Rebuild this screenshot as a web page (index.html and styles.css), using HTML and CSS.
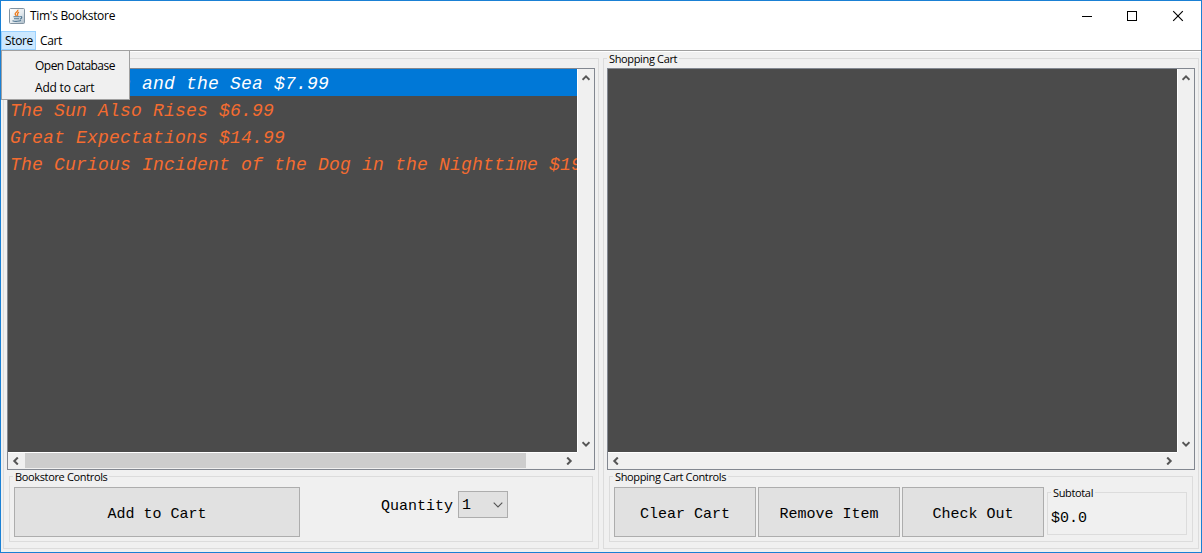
FILE: index.html
```html
<!DOCTYPE html>
<html lang="en">
<head>
<meta charset="utf-8">
<title>Tim's Bookstore</title>
<link rel="stylesheet" href="styles.css">
</head>
<body>
<div class="window">
  <header class="titlebar">
    <svg class="java" width="16" height="16" viewBox="0 0 16 16">
      <defs><linearGradient id="tile" x1="0" y1="0" x2="1" y2="1"><stop offset="0" stop-color="#fff"/><stop offset=".55" stop-color="#e5ebef"/><stop offset="1" stop-color="#a9bac7"/></linearGradient></defs>
      <rect x=".5" y=".5" width="15" height="15" rx="1" fill="url(#tile)" stroke="#8293a1"/>
      <path d="M8.8 1.8C9.6 4 5.4 4.6 6.2 6.300c.3.700.9 1 1.100 1.700M10 4.200C7.500 5.300 8.800 6.200 8.600 7.800" fill="none" stroke="#ee7a1a" stroke-width="1.300"/>
      <path d="M4.500 8.800h6.300M5 10.700h5M11.300 8.600c2.200-.3 1.800 2-.5 2.500M3.500 12.700c2 .9 6.500.8 8.500-.1" fill="none" stroke="#4d7490" stroke-width="1.100"/>
    </svg>
    <span class="title">Tim's Bookstore</span>
    <svg class="winbtns" width="104" height="12" viewBox="0 0 104 12" fill="none" stroke="#000">
      <path d="M0 6.500h10" shape-rendering="crispEdges"/>
      <rect x="45.500" y="1.500" width="9" height="9" shape-rendering="crispEdges"/>
      <path d="M91.200 1.200l9.600 9.600M100.800 1.200l-9.600 9.600" stroke-width="1.150"/>
    </svg>
  </header>
  <nav class="menubar">
    <span class="menu menu-open">Store</span><span class="menu">Cart</span>
    <div class="popup"><div class="item">Open Database</div><div class="item">Add to cart</div></div>
  </nav>
  <main class="panes">
    <section class="group pane">
      <div class="scrollpane">
        <div class="view">
          <div class="book selected">The Old Man and the Sea $7.99</div>
          <div class="book">The Sun Also Rises $6.99</div>
          <div class="book">Great Expectations $14.99</div>
          <div class="book">The Curious Incident of the Dog in the Nighttime $19.99</div>
        </div>
        <div class="vbar">
          <svg class="arrow" viewBox="0 0 8 8"><path d="M.5 5.800L4 2.300 7.500 5.800"/></svg>
          <svg class="arrow" viewBox="0 0 8 8"><path d="M.5 2.200L4 5.700 7.500 2.200"/></svg>
        </div>
        <div class="hbar">
          <svg class="arrow" viewBox="0 0 8 8"><path d="M5.800.500L2.300 4 5.800 7.500"/></svg>
          <div class="track"><div class="thumb"></div></div>
          <svg class="arrow" viewBox="0 0 8 8"><path d="M2.200.500L5.700 4 2.200 7.500"/></svg>
        </div>
      </div>
      <div class="group controls">
        <span class="legend">Bookstore Controls</span>
        <div class="button add">Add to Cart</div>
        <div class="quantity">
          <span class="qlabel">Quantity</span>
          <div class="combo"><span>1</span><svg width="10" height="6" viewBox="0 0 10 6"><path d="M.7.700L5 5 9.300.700" fill="none" stroke="#555" stroke-width="1.100"/></svg></div>
        </div>
      </div>
    </section>
    <section class="group pane">
      <span class="legend">Shopping Cart</span>
      <div class="scrollpane">
        <div class="view"></div>
        <div class="vbar">
          <svg class="arrow" viewBox="0 0 8 8"><path d="M.5 5.800L4 2.300 7.500 5.800"/></svg>
          <svg class="arrow" viewBox="0 0 8 8"><path d="M.5 2.200L4 5.700 7.500 2.200"/></svg>
        </div>
        <div class="hbar">
          <svg class="arrow" viewBox="0 0 8 8"><path d="M5.800.500L2.300 4 5.800 7.500"/></svg>
          <div class="track"></div>
          <svg class="arrow" viewBox="0 0 8 8"><path d="M2.200.500L5.700 4 2.200 7.500"/></svg>
        </div>
      </div>
      <div class="group controls">
        <span class="legend">Shopping Cart Controls</span>
        <div class="button">Clear Cart</div>
        <div class="button">Remove Item</div>
        <div class="button">Check Out</div>
        <div class="group subtotal"><span class="legend">Subtotal</span>$0.0</div>
      </div>
    </section>
  </main>
</div>
</body>
</html>
```
FILE: styles.css
```css
* { box-sizing: border-box; }
body { margin: 0; overflow: hidden; }
.window {
  width: 1202px; height: 553px; border: 1px solid #1a80d4; background: #f0f0f0;
  display: flex; flex-direction: column; color: #000;
  font: 12px/16px "Open Sans", "Noto Sans", sans-serif;
}
.titlebar { height: 30px; background: #fff; display: flex; align-items: center; padding: 0 15px 0 8px; }
.title { margin-left: 5px; letter-spacing: -.3px; }
.winbtns { margin-left: auto; }
.menubar { position: relative; height: 20px; background: #fff; border-bottom: 1px solid #a0a0a0; display: flex; }
.menu { height: 19px; line-height: 18px; padding: 1px 4px 0; letter-spacing: -.35px; }
.menu-open { width: 35px; padding: 0 3px; background: #cce8ff; border: 1px solid #99d1ff; }
.popup {
  position: absolute; left: 0; top: 19px; width: 129px; height: 50px; z-index: 5;
  background: #f0f0f0; border: 1px solid #a0a0a0; padding: 3px 0 2px;
}
.item { height: 22px; line-height: 23px; padding-left: 33px; letter-spacing: -.2px; }
.item:first-child { letter-spacing: -.52px; }
.panes { flex: 1; border-top: 1px solid #fff; display: flex; gap: 4px; padding: 6px 2px 3px; }
.group { position: relative; border: 1px solid #dcdcdc; }
.pane { width: 597px; height: 491px; padding: 9px 3px; }
.pane:last-child { width: 596px; }
.legend {
  position: absolute; left: 3px; top: -6px; padding: 0 2px; background: #f0f0f0;
  font: 11px/11px "Open Sans", "Noto Sans", sans-serif; letter-spacing: -.35px; white-space: nowrap;
}
.scrollpane {
  width: 588px; height: 402px; border: 1px solid #828790; display: grid;
  grid-template-columns: 569px 17px; grid-template-rows: 383px 17px;
}
.view { background: #4b4b4b; overflow: hidden; }
.book {
  height: 27px; padding: 3px 0 0 2px; white-space: pre; color: #f46c30;
  font: italic 18px/25px "Liberation Mono", monospace; letter-spacing: .198px;
}
.selected { background: #0078d7; color: #fff; }
.vbar { border-left: 1px solid #fff; display: flex; flex-direction: column; justify-content: space-between; align-items: center; padding: 5px 1px 4px 0; }
.hbar { border-top: 1px solid #fff; display: flex; align-items: center; padding: 0 4px 1px; }
.arrow { width: 8px; height: 8px; flex: none; fill: none; stroke: #555; stroke-width: 2; }
.track { flex: 1; height: 15px; margin: 0 5px; }
.thumb { width: 501px; height: 15px; background: #cdcdcd; }
.controls { width: 584px; height: 66px; margin: 6px 0 0 2px; padding: 10px 4px 0; display: flex; gap: 2px; }
.button {
  width: 142px; height: 50px; background: #e1e1e1; border: 1px solid #adadad; text-align: center;
  font: 15px/53px "Liberation Mono", monospace;
}
.add { width: 286px; }
.quantity { display: flex; margin: 4px 0 0 79px; gap: 5px; font: 15px/30px "Liberation Mono", monospace; }
.qlabel { padding-top: 1px; }
.combo {
  width: 50px; height: 27px; border: 1px solid #adadad; background: #e1e1e1;
  display: flex; align-items: center; justify-content: space-between; padding: 3px 4px 0 3px;
}
.combo svg { margin-bottom: 2px; }
.subtotal { width: 140px; height: 43px; margin: 5px 0 0 1px; padding: 10px 0 0 3px; font: 15px/32px "Liberation Mono", monospace; }
.subtotal .legend { line-height: 12px; }
```
